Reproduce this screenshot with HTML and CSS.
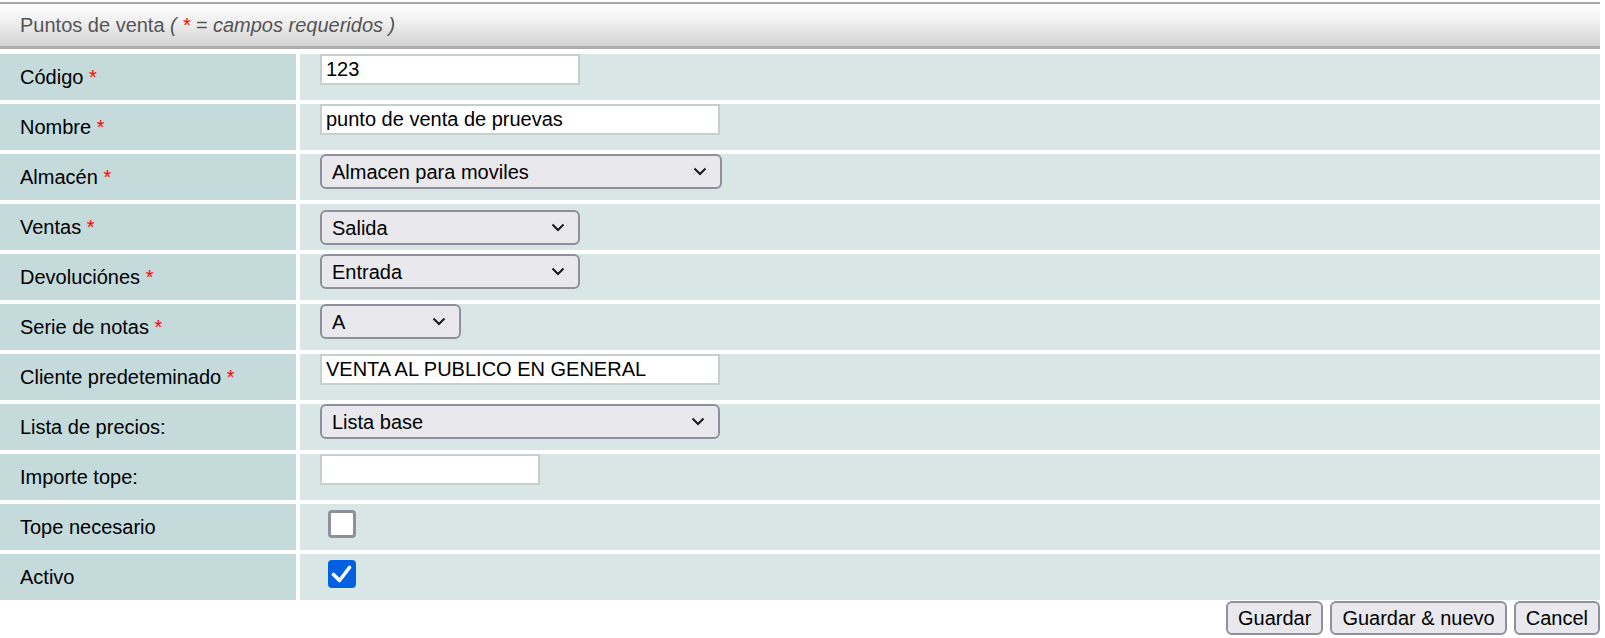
FILE: index.html
```html
<!DOCTYPE html>
<html>
<head>
	<title>Puntos de venta</title>
	<meta charset="UTF-8">
	<link rel="stylesheet" href="styles.css">
</head>
<body>
	<div class="caption">
		Puntos de venta <i>( <span class="req">*</span> = campos requeridos )</i>
	</div>

	<div class="form">
		<div class="label">Código <span class="req">*</span></div>
		<div class="value"><input type="text" class="field w-260" value="123"></div>

		<div class="label">Nombre <span class="req">*</span></div>
		<div class="value"><input type="text" class="field w-400" value="punto de venta de pruevas"></div>

		<div class="label">Almacén <span class="req">*</span></div>
		<div class="value">
			<span class="pick w-402">
				<select><option>Almacen para moviles</option></select>
				<svg class="chev" width="14" height="9" viewBox="0 0 14 9"><path d="M1.5 1.5 L7 7 L12.5 1.5" fill="none" stroke="#1b1b1b" stroke-width="2"/></svg>
			</span>
		</div>

		<div class="label">Ventas <span class="req">*</span></div>
		<div class="value mid">
			<span class="pick w-260">
				<select><option>Salida</option></select>
				<svg class="chev" width="14" height="9" viewBox="0 0 14 9"><path d="M1.5 1.5 L7 7 L12.5 1.5" fill="none" stroke="#1b1b1b" stroke-width="2"/></svg>
			</span>
		</div>

		<div class="label">Devoluciónes <span class="req">*</span></div>
		<div class="value">
			<span class="pick w-260">
				<select><option>Entrada</option></select>
				<svg class="chev" width="14" height="9" viewBox="0 0 14 9"><path d="M1.5 1.5 L7 7 L12.5 1.5" fill="none" stroke="#1b1b1b" stroke-width="2"/></svg>
			</span>
		</div>

		<div class="label">Serie de notas <span class="req">*</span></div>
		<div class="value">
			<span class="pick w-141">
				<select><option>A</option></select>
				<svg class="chev" width="14" height="9" viewBox="0 0 14 9"><path d="M1.5 1.5 L7 7 L12.5 1.5" fill="none" stroke="#1b1b1b" stroke-width="2"/></svg>
			</span>
		</div>

		<div class="label">Cliente predeteminado <span class="req">*</span></div>
		<div class="value"><input type="text" class="field w-400" value="VENTA AL PUBLICO EN GENERAL"></div>

		<div class="label">Lista de precios:</div>
		<div class="value">
			<span class="pick w-400">
				<select><option>Lista base</option></select>
				<svg class="chev" width="14" height="9" viewBox="0 0 14 9"><path d="M1.5 1.5 L7 7 L12.5 1.5" fill="none" stroke="#1b1b1b" stroke-width="2"/></svg>
			</span>
		</div>

		<div class="label">Importe tope:</div>
		<div class="value"><input type="text" class="field w-220" value=""></div>

		<div class="label">Tope necesario</div>
		<div class="value mid"><input type="checkbox" class="box"></div>

		<div class="label">Activo</div>
		<div class="value mid"><input type="checkbox" class="box" checked></div>
	</div>

	<div class="actions">
		<button>Guardar</button>
		<button>Guardar &amp; nuevo</button>
		<button>Cancel</button>
	</div>
</body>
</html>
```

FILE: styles.css
```css
body {
	margin: 0;
	padding: 2px 0 0 0;
	background-color: #fff;
	color: #000;
	font-family: "Liberation Sans", Arial, sans-serif;
	font-size: 20px;
}

.caption {
	width: 1600px;
	height: 47px;
	box-sizing: border-box;
	padding-left: 20px;
	margin-bottom: 5px;
	border-top: 2px solid #a8a8a8;
	border-bottom: 3px solid #acacac;
	background: linear-gradient(to bottom, #fdfdfd 0%, #f1f1f1 40%, #d3d3d3 100%);
	color: #555;
	line-height: 42px;
}

.caption i {
	font-style: italic;
}

.req {
	color: #f00;
}

.form {
	width: 1600px;
	display: grid;
	grid-template-columns: 296px 1fr;
	grid-auto-rows: 46px;
	gap: 4px;
}

/* plain block so the space before the asterisk is kept */
.label {
	background-color: #c5dadb;
	padding-left: 20px;
	line-height: 46px;
	white-space: nowrap;
}

.value {
	background-color: #d8e6e6;
	padding-left: 20px;
	display: flex;
	align-items: flex-start;
}

.value.mid {
	padding-top: 6px;
}

.field {
	height: 31px;
	box-sizing: border-box;
	border: 2px solid #c6cece;
	background: #fff;
	padding: 0 4px;
	margin: 0;
	font-family: inherit;
	font-size: 20px;
	color: #000;
	outline: none;
}

.w-220 { width: 220px; }
.w-260 { width: 260px; }
.w-141 { width: 141px; }
.w-400 { width: 400px; }
.w-402 { width: 402px; }

.pick {
	position: relative;
	display: inline-flex;
}

.pick select {
	-webkit-appearance: none;
	appearance: none;
	width: 100%;
	height: 35px;
	margin: 0;
	padding: 0 30px 0 10px;
	border: 2px solid #8f8f9d;
	border-radius: 6px;
	background-color: #e9e9ed;
	font-family: inherit;
	font-size: 20px;
	color: #000;
}

.chev {
	position: absolute;
	right: 15px;
	top: 13px;
	pointer-events: none;
}

.box {
	-webkit-appearance: none;
	appearance: none;
	width: 28px;
	height: 28px;
	margin: 0 0 0 8px;
	box-sizing: border-box;
	border: 3px solid #8f8f9d;
	border-radius: 4px;
	background-color: #fff;
}

.box:checked {
	border-color: #0060df;
	background-color: #0060df;
	background-image: url("data:image/svg+xml;utf8,<svg xmlns='http://www.w3.org/2000/svg' width='28' height='28' viewBox='0 0 28 28'><path d='M5.5 14.5 L11.5 20.5 L21.5 7.5' fill='none' stroke='white' stroke-width='3.6' stroke-linecap='round' stroke-linejoin='round'/></svg>");
	background-position: -3px -3px;
	background-repeat: no-repeat;
}

.actions {
	width: 1600px;
	display: flex;
	justify-content: flex-end;
	gap: 7px;
	margin-top: 1px;
}

.actions button {
	height: 34px;
	padding: 0 10px;
	border: 2px solid #8f8f9d;
	border-radius: 6px;
	background-color: #e9e9ed;
	font-family: inherit;
	font-size: 20px;
	color: #000;
}
```
